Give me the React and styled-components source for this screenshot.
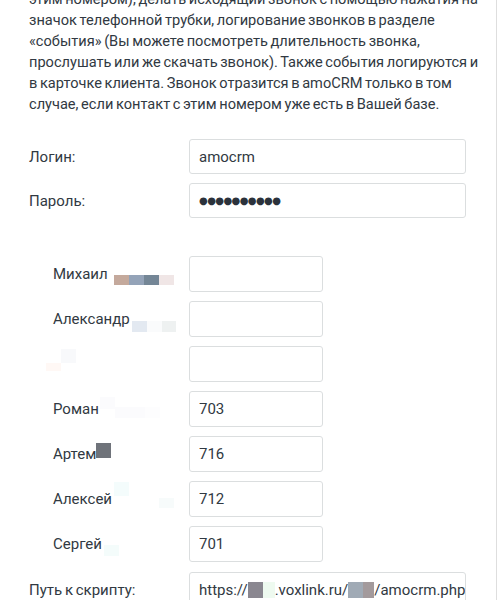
import styled, { createGlobalStyle } from "styled-components";

const GlobalStyle = createGlobalStyle`
  html, body {
    margin: 0;
    padding: 0;
    background: #fff;
  }
  body {
    font-family: Roboto, "Noto Sans", sans-serif;
    color: #313942;
  }
`;

const Panel = styled.div`
  width: 496px;
  height: 600px;
  overflow: hidden;
  border-right: 1px solid #dedede;
`;

const Description = styled.p`
  margin: -11px 0 0;
  padding: 0 0 0 29px;
  font-size: 14.6px;
  line-height: 21px;
  word-spacing: -1px;
  white-space: nowrap;
`;

const Form = styled.div`
  display: flex;
  flex-direction: column;
  gap: 9px;
  margin-top: ${(p) => p.$top}px;
`;

const Row = styled.div`
  display: grid;
  grid-template-columns: ${(p) => (p.$user ? "136px 134px" : "160px 277px")};
  align-items: center;
  padding-left: ${(p) => (p.$user ? 53 : 29)}px;
`;

const Label = styled.label`
  display: flex;
  align-items: center;
  height: 20px;
  font-size: 15px;
  line-height: 20px;
  word-spacing: -1px;
  white-space: nowrap;
`;

const Input = styled.input`
  box-sizing: border-box;
  width: 100%;
  height: ${(p) => (p.$tall ? 36 : 35)}px;
  padding: 0 9px;
  border: 1px solid #dbdedf;
  border-radius: 3px;
  background: #fff;
  font-family: Roboto, "Noto Sans", sans-serif;
  font-size: 15px;
  color: #313942;
  outline: none;
`;

const Dots = styled(Input)`
  font-family: "DejaVu Sans", sans-serif;
  font-size: 10px;
  letter-spacing: ${(p) => p.$spacing}px;
  color: #2b323b;
`;

const UrlBox = styled.div`
  box-sizing: border-box;
  height: 36px;
  padding: 0 9px;
  border: 1px solid #dbdedf;
  border-radius: 3px;
  display: flex;
  align-items: center;
  overflow: hidden;
  white-space: nowrap;
  font-size: 15px;
`;

const Blur = styled.span`
  display: block;
  flex: none;
  width: ${(p) => p.$w || 15}px;
  height: ${(p) => p.$h || 10}px;
  margin-top: ${(p) => p.$t || 0}px;
  background: ${(p) => p.$c};
`;

const BlurGroup = styled.span`
  display: flex;
  align-items: flex-start;
  flex: none;
  margin-left: ${(p) => p.$ml || 0}px;
  transform: translateY(${(p) => p.$dy || 0}px);
`;

const users = [
  { name: "Михаил", blur: [["#c4a99c"], ["#94a3b8"], ["#748696"], ["#f0e6e6"]], ml: 6, dy: 6, value: "" },
  { name: "Александр", blur: [["#e3e9f1", 15, 11], ["#fafbfc", 15, 11], ["#eef1f1", 14, 11]], ml: 2, dy: 7, value: "" },
  { name: "", blur: [["#fff8f5", 15, 8, 14], ["#f8f9fb", 15, 14]], ml: -7, dy: -4, value: "" },
  { name: "Роман", blur: [["#fbfbfd", 15, 12, -4], ["#fbfbfd", 30, 11, 6], ["#fdfdfe", 15, 11, 6]], ml: 1, dy: 0, value: "703" },
  { name: "Артем", blur: [["#6f737a", 15, 15]], ml: 0, dy: -4, value: "716" },
  { name: "Алексей", blur: [["#f4fcfc", 15, 14, -8], ["#fff", 30, 4], ["#f7fbfb", 15, 10, 8]], ml: 2, dy: 0, value: "712" },
  { name: "Сергей", blur: [["#f4fcfb", 15, 11]], ml: 2, dy: 6, value: "701" },
];

export default function App() {
  return (
    <Panel>
      <GlobalStyle />
      <Description>
        этим номером), делать исходящий звонок с помощью нажатия на
        <br />
        значок телефонной трубки, логирование звонков в разделе
        <br />
        «события» (Вы можете посмотреть длительность звонка,
        <br />
        прослушать или же скачать звонок). Также события логируются и
        <br />
        в карточке клиента. Звонок отразится в amoCRM только в том
        <br />
        случае, если контакт с этим номером уже есть в Вашей базе.
      </Description>

      <Form $top={24}>
        <Row>
          <Label>Логин:</Label>
          <Input defaultValue="amocrm" readOnly />
        </Row>
        <Row>
          <Label>Пароль:</Label>
          <Dots defaultValue="●●●●●●●●●●" $spacing={-0.6} readOnly />
        </Row>
      </Form>

      <Form $top={38}>
        {users.map((u, i) => (
          <Row $user key={i}>
            <Label>
              {u.name}
              <BlurGroup $ml={u.ml} $dy={u.dy}>
                {u.blur.map(([c, w, h, t], j) => (
                  <Blur key={j} $c={c} $w={w} $h={h} $t={t} />
                ))}
              </BlurGroup>
            </Label>
            <Input $tall defaultValue={u.value} readOnly />
          </Row>
        ))}
      </Form>

      <Form $top={10}>
        <Row>
          <Label>Путь к скрипту:</Label>
          <UrlBox>
            https://
            <Blur $c="#8a8790" $h={16} />
            <Blur $c="#eefaf0" $w={12} $h={16} />
            .voxlink.ru/
            <Blur $c="#a0aab5" $h={16} />
            <Blur $c="#a39a9c" $w={11} $h={16} />
            /amocrm.php
          </UrlBox>
        </Row>
      </Form>
    </Panel>
  );
}
